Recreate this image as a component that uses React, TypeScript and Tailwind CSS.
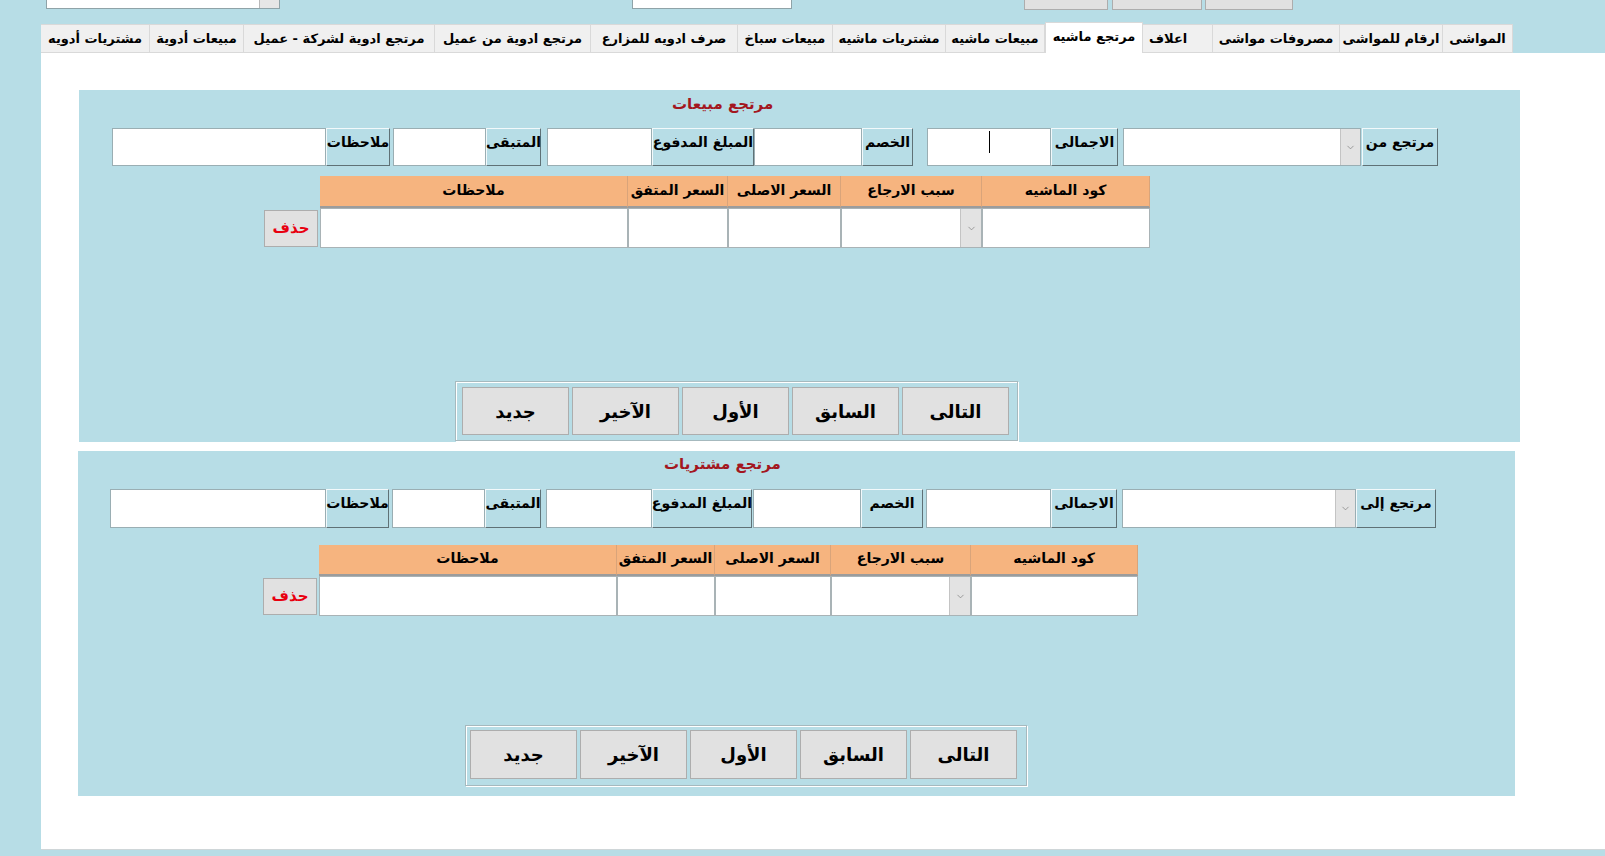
import { ChevronDown } from "lucide-react";

type Field = { kind: "input" | "label" | "combo"; cls: string; text?: string; caret?: boolean };
type Col = { title: string; cls: string; combo?: boolean };

const TABS = [
  { t: "مشتريات أدويه", cls: "w-[109px]" },
  { t: "مبيعات أدوية", cls: "w-[94px]" },
  { t: "مرتجع ادوية لشركة - عميل", cls: "w-[191px]" },
  { t: "مرتجع ادوية من عميل", cls: "w-[156px]" },
  { t: "صرف ادويه للمزارع", cls: "w-[147px]" },
  { t: "مبيعات سباخ", cls: "w-[95px]" },
  { t: "مشتريات ماشيه", cls: "w-[113px]" },
  { t: "مبيعات ماشيه", cls: "w-[99px]" },
  { t: "مرتجع ماشيه", cls: "w-[98px]", active: true },
  { t: "اعلاف", cls: "w-[70px] justify-start pl-[6px]" },
  { t: "مصروفات مواشى", cls: "w-[127px]" },
  { t: "ارقام للمواشى", cls: "w-[103px]" },
  { t: "المواشى", cls: "w-[70px]" },
];

const SALES_FIELDS: Field[] = [
  { kind: "input", cls: "w-[214px] ml-[33px]" },
  { kind: "label", cls: "w-[64px]", text: "ملاحظات" },
  { kind: "input", cls: "w-[93px] ml-[3px]" },
  { kind: "label", cls: "w-[55px]", text: "المتبقى" },
  { kind: "input", cls: "w-[105px] ml-[6px]" },
  { kind: "label", cls: "w-[102px]", text: "المبلغ المدفوع" },
  { kind: "input", cls: "w-[108px]" },
  { kind: "label", cls: "w-[51px]", text: "الخصم" },
  { kind: "input", cls: "w-[124px] ml-[14px]", caret: true },
  { kind: "label", cls: "w-[67px]", text: "الاجمالى" },
  { kind: "combo", cls: "w-[238px] ml-[5px]" },
  { kind: "label", cls: "w-[76px] ml-[1px]", text: "مرتجع من" },
];

const PURCHASE_FIELDS: Field[] = [
  { kind: "input", cls: "w-[216px] ml-[32px]" },
  { kind: "label", cls: "w-[63px]", text: "ملاحظات" },
  { kind: "input", cls: "w-[93px] ml-[3px]" },
  { kind: "label", cls: "w-[56px]", text: "المتبقى" },
  { kind: "input", cls: "w-[106px] ml-[5px]" },
  { kind: "label", cls: "w-[100px]", text: "المبلغ المدفوع" },
  { kind: "input", cls: "w-[108px] ml-[1px]" },
  { kind: "label", cls: "w-[62px]", text: "الخصم" },
  { kind: "input", cls: "w-[125px] ml-[3px]" },
  { kind: "label", cls: "w-[66px]", text: "الاجمالى" },
  { kind: "combo", cls: "w-[234px] ml-[5px]" },
  { kind: "label", cls: "w-[80px]", text: "مرتجع إلى" },
];

const SALES_COLS: Col[] = [
  { title: "ملاحظات", cls: "w-[308px]" },
  { title: "السعر المتفق", cls: "w-[100px]" },
  { title: "السعر الاصلى", cls: "w-[113px]" },
  { title: "سبب الارجاع", cls: "w-[141px]", combo: true },
  { title: "كود الماشيه", cls: "w-[168px]" },
];

const PURCHASE_COLS: Col[] = [
  { title: "ملاحظات", cls: "w-[298px]" },
  { title: "السعر المتفق", cls: "w-[98px]" },
  { title: "السعر الاصلى", cls: "w-[116px]" },
  { title: "سبب الارجاع", cls: "w-[140px]", combo: true },
  { title: "كود الماشيه", cls: "w-[167px]" },
];

const NAV = ["جديد", "الآخير", "الأول", "السابق", "التالى"];

export default function App() {
  return (
    <div className="h-[856px] w-[1605px] overflow-hidden bg-[#b7dde6] font-['DejaVu_Sans',sans-serif] text-black">
      {/* controls of the form above, scrolled mostly out of view */}
      <div className="flex h-[22px] items-start">
        <div className="ml-[46px] flex h-[9px] w-[234px] border-x border-b border-[#8fa3a8] bg-white">
          <div className="flex-1" />
          <div className="w-[20px] border-l border-[#b9b9b9] bg-[#e6e6e6]" />
        </div>
        <div className="ml-[352px] h-[9px] w-[160px] border-x border-b border-[#8fa3a8] bg-white" />
        <div className="ml-[232px] h-[10px] w-[84px] border-x border-b border-[#adadad] bg-[#e1e1e1]" />
        <div className="ml-[4px] h-[10px] w-[90px] border-x border-b border-[#adadad] bg-[#e1e1e1]" />
        <div className="ml-[3px] h-[10px] w-[88px] border-x border-b border-[#adadad] bg-[#e1e1e1]" />
      </div>

      {/* tab strip */}
      <div className="flex h-[31px] items-end pl-[41px]">
        {TABS.map((tab) =>
          tab.active ? (
            <div
              key={tab.t}
              className={`flex h-[31px] items-center justify-center border-x border-t border-[#d9d9d9] bg-white pb-[2px] text-[13px] font-bold whitespace-nowrap ${tab.cls}`}
            >
              {tab.t}
            </div>
          ) : (
            <div
              key={tab.t}
              className={`flex h-[29px] items-center justify-center border-r border-t border-b border-[#d9d9d9] bg-[#f0f0f0] text-[13px] font-bold whitespace-nowrap ${tab.cls}`}
            >
              {tab.t}
            </div>
          )
        )}
      </div>

      {/* tab page */}
      <div className="ml-[41px] h-[797px] border-b border-[#cfd6d8] bg-white pt-[37px]">
        <section className="ml-[38px] h-[352px] w-[1441px] bg-[#b7dde6]">
          <h2 className="pl-[593px] pt-[4px] text-[15px] leading-[20px] font-bold text-[#a3171f]">مرتجع مبيعات</h2>
          <FieldRow fields={SALES_FIELDS} cls="mt-[14px] h-[38px]" />
          <ReturnGrid cols={SALES_COLS} cls="mt-[10px]" head="h-[32px]" />
          <NavBar cls="ml-[376px] mt-[133px] h-[60px] w-[563px] pl-[6px] pt-[5px]" btn="h-[48px]" />
        </section>

        <section className="mt-[9px] ml-[37px] h-[345px] w-[1437px] bg-[#b7dde6]">
          <h2 className="pl-[586px] pt-[3px] text-[15px] leading-[20px] font-bold text-[#a3171f]">مرتجع مشتريات</h2>
          <FieldRow fields={PURCHASE_FIELDS} cls="mt-[15px] h-[39px]" />
          <ReturnGrid cols={PURCHASE_COLS} cls="mt-[17px]" head="h-[31px]" />
          <NavBar cls="ml-[387px] mt-[109px] h-[61px] w-[562px] pl-[4px] pt-[4px]" btn="h-[49px]" />
        </section>
      </div>
    </div>
  );
}

function FieldRow({ fields, cls }: { fields: Field[]; cls: string }) {
  return (
    <div className={`flex ${cls}`}>
      {fields.map((f, i) => {
        if (f.kind === "label")
          return (
            <div
              key={i}
              className={`flex h-full justify-center border border-t-[#f2f9fb] border-l-[#f2f9fb] border-r-[#5f7176] border-b-[#5f7176] pt-[4px] text-[14px] leading-[18px] font-bold whitespace-nowrap ${f.cls}`}
            >
              {f.text}
            </div>
          );
        if (f.kind === "combo")
          return (
            <div key={i} className={`flex h-full border border-[#9aaeb3] bg-white ${f.cls}`}>
              <div className="flex-1" />
              <div className="flex w-[20px] items-center justify-center border-l border-[#c4c4c4] bg-[#e3e3e3] text-[#7a7a7a]">
                <ChevronDown size={11} strokeWidth={1.5} />
              </div>
            </div>
          );
        return (
          <div key={i} className={`flex h-full border border-[#9aaeb3] bg-white ${f.cls}`}>
            {f.caret && <span className="mt-[2px] ml-[61px] h-[22px] w-[1px] bg-black" />}
          </div>
        );
      })}
    </div>
  );
}

function ReturnGrid({ cols, cls, head }: { cols: Col[]; cls: string; head: string }) {
  return (
    <div className={`flex items-end pl-[185px] ${cls}`}>
      <button
        type="button"
        className="mb-[1px] flex h-[37px] w-[54px] items-center justify-center border border-[#adadad] bg-[#e1e1e1] text-[15px] font-bold text-[#e8000f]"
      >
        حذف
      </button>
      <div className="ml-[2px] flex">
        {cols.map((c) => (
          <div key={c.title} className={`flex flex-col ${c.cls}`}>
            <div
              className={`flex items-center justify-center border-r border-b-2 border-r-[#d9a47a] border-b-[#9c9c9c] bg-[#f6b47f] pb-[2px] text-[14px] font-bold whitespace-nowrap ${head}`}
            >
              {c.title}
            </div>
            <div className="flex h-[40px] border border-[#a9b3b6] bg-white">
              <div className="flex-1" />
              {c.combo && (
                <div className="flex w-[21px] items-center justify-center border-l border-[#c4c4c4] bg-[#e3e3e3] text-[#7a7a7a]">
                  <ChevronDown size={11} strokeWidth={1.5} />
                </div>
              )}
            </div>
          </div>
        ))}
      </div>
    </div>
  );
}

function NavBar({ cls, btn }: { cls: string; btn: string }) {
  return (
    <div className={`flex gap-[3px] border border-[#a6b9be] shadow-[inset_1px_1px_0_#ffffff,1px_1px_0_#ffffff] ${cls}`}>
      {NAV.map((label) => (
        <button
          key={label}
          type="button"
          className={`flex w-[107px] items-center justify-center border border-[#adadad] bg-[#e1e1e1] text-[18px] font-bold ${btn}`}
        >
          {label}
        </button>
      ))}
    </div>
  );
}
